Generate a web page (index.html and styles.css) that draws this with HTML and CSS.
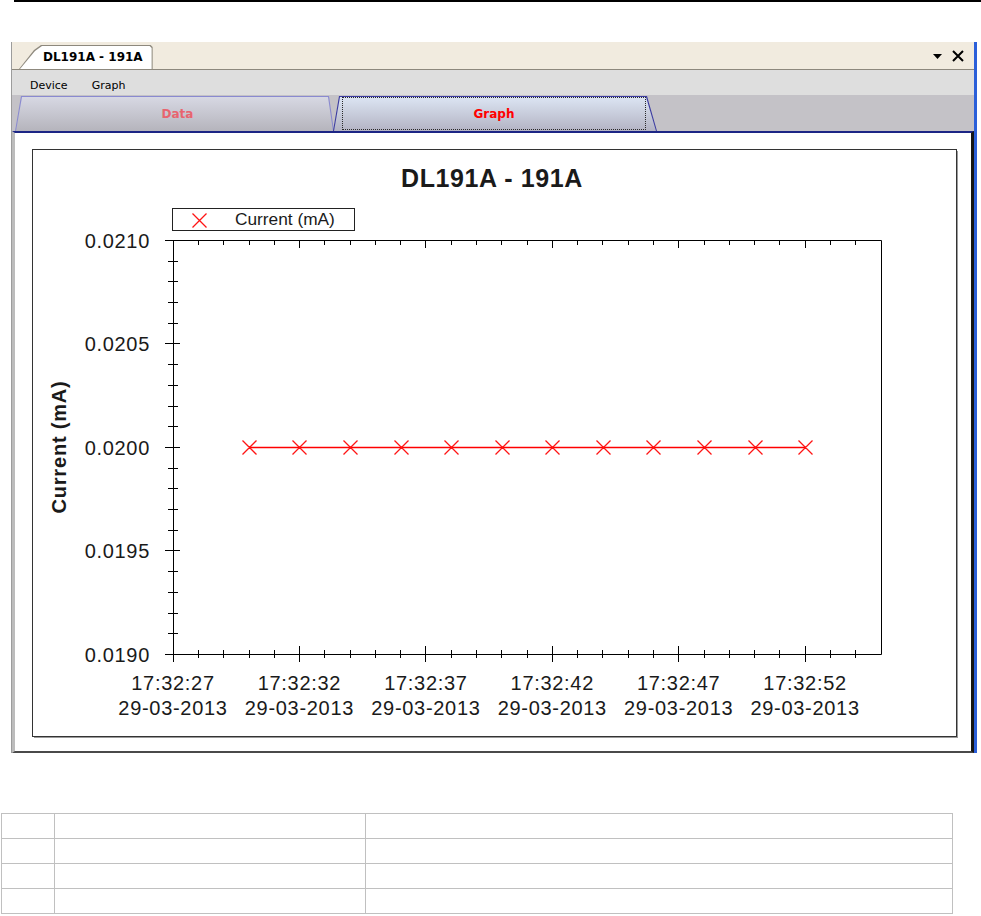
FILE: index.html
```html
<!DOCTYPE html>
<html>
<head>
<meta charset="utf-8">
<title>DL191A - 191A</title>
<link rel="stylesheet" href="styles.css">
</head>
<body>
<div class="rule"></div>
<div class="window">
  <div class="titlebar">
    <div class="doc-tab"><div class="doc-tab-face">DL191A - 191A</div></div>
    <div class="title-tools">
      <svg width="32" height="14" viewBox="0 0 32 14">
        <path d="M1 5h9l-4.5 5z" fill="#000"/>
        <path d="M21 2L31 12M31 2L21 12" stroke="#000" stroke-width="2" fill="none"/>
      </svg>
    </div>
  </div>
  <div class="menubar"><span>Device</span><span>Graph</span></div>
  <div class="tabstrip">
    <div class="tab tab-data"><div class="tab-face face-data">Data</div></div>
    <div class="tab tab-graph"><div class="tab-face face-graph"><div class="focus">Graph</div></div></div>
  </div>
  <div class="content">
    <svg class="chart" width="927" height="590" viewBox="0 0 927 590">
      <rect x="0.5" y="0.5" width="924" height="587" fill="#fff" stroke="#333"/>
      <path d="M925.5 2V589M2 588.5H925" stroke="#9a9a9a" fill="none"/>
      <text class="title" x="460" y="38" text-anchor="middle">DL191A - 191A</text>
      <rect x="140.5" y="59.5" width="182" height="22" fill="#fff" stroke="#222"/>
      <path class="mark" d="M160.5 64.5L174.5 78.5M160.5 78.5L174.5 64.5"/>
      <text class="legend" x="203" y="76">Current (mA)</text>
      <path d="M133 91.5H849.5V505.5H133M141.5 91V506" stroke="#000" fill="none"/>
      <path d="M133 194.5H148M133 298.5H148M133 401.5H148M133 505.5H148" stroke="#000" fill="none"/>
      <path d="M136 112.5H146M136 132.5H146M136 153.5H146M136 174.5H146M136 215.5H146M136 236.5H146M136 257.5H146M136 277.5H146M136 319.5H146M136 339.5H146M136 360.5H146M136 381.5H146M136 422.5H146M136 443.5H146M136 464.5H146M136 484.5H146" stroke="#000" fill="none"/>
      <path d="M141.5 497V513M267.5 497V513M393.5 497V513M520.5 497V513M646.5 497V513M773.5 497V513" stroke="#000" fill="none"/>
      <path d="M166.5 501V509M191.5 501V509M217.5 501V509M242.5 501V509M292.5 501V509M318.5 501V509M343.5 501V509M368.5 501V509M419.5 501V509M444.5 501V509M469.5 501V509M495.5 501V509M545.5 501V509M570.5 501V509M596.5 501V509M621.5 501V509M672.5 501V509M697.5 501V509M722.5 501V509M747.5 501V509M798.5 501V509M823.5 501V509" stroke="#000" fill="none"/>
      <path d="M267.5 91V99M393.5 91V99M520.5 91V99M646.5 91V99M773.5 91V99" stroke="#000" fill="none"/>
      <path d="M166.5 91V96M191.5 91V96M217.5 91V96M242.5 91V96M292.5 91V96M318.5 91V96M343.5 91V96M368.5 91V96M419.5 91V96M444.5 91V96M469.5 91V96M495.5 91V96M545.5 91V96M570.5 91V96M596.5 91V96M621.5 91V96M672.5 91V96M697.5 91V96M722.5 91V96M747.5 91V96M798.5 91V96M823.5 91V96" stroke="#000" fill="none"/>
      <path class="series" d="M217 298.5H773"/>
      <path class="mark" d="M210.5 291.5L224.5 305.5M210.5 305.5L224.5 291.5M260.5 291.5L274.5 305.5M260.5 305.5L274.5 291.5M311.5 291.5L325.5 305.5M311.5 305.5L325.5 291.5M362.5 291.5L376.5 305.5M362.5 305.5L376.5 291.5M412.5 291.5L426.5 305.5M412.5 305.5L426.5 291.5M463.5 291.5L477.5 305.5M463.5 305.5L477.5 291.5M513.5 291.5L527.5 305.5M513.5 305.5L527.5 291.5M564.5 291.5L578.5 305.5M564.5 305.5L578.5 291.5M614.5 291.5L628.5 305.5M614.5 305.5L628.5 291.5M665.5 291.5L679.5 305.5M665.5 305.5L679.5 291.5M716.5 291.5L730.5 305.5M716.5 305.5L730.5 291.5M766.5 291.5L780.5 305.5M766.5 305.5L780.5 291.5"/>
      <g class="ylabels" text-anchor="end">
        <text x="118" y="98.5">0.0210</text>
        <text x="118" y="202">0.0205</text>
        <text x="118" y="305.5">0.0200</text>
        <text x="118" y="409">0.0195</text>
        <text x="118" y="512.5">0.0190</text>
      </g>
      <g class="xlabels" text-anchor="middle">
        <text x="141" y="541">17:32:27</text><text x="141" y="566">29-03-2013</text>
        <text x="267.4" y="541">17:32:32</text><text x="267.4" y="566">29-03-2013</text>
        <text x="393.9" y="541">17:32:37</text><text x="393.9" y="566">29-03-2013</text>
        <text x="520.3" y="541">17:32:42</text><text x="520.3" y="566">29-03-2013</text>
        <text x="646.7" y="541">17:32:47</text><text x="646.7" y="566">29-03-2013</text>
        <text x="773.1" y="541">17:32:52</text><text x="773.1" y="566">29-03-2013</text>
      </g>
      <text class="ytitle" transform="translate(34 298) rotate(-90)" text-anchor="middle">Current (mA)</text>
    </svg>
  </div>
</div>
<table class="grid">
  <colgroup><col class="c1"><col class="c2"><col class="c3"></colgroup>
  <tr><td></td><td></td><td></td></tr>
  <tr><td></td><td></td><td></td></tr>
  <tr><td></td><td></td><td></td></tr>
  <tr><td></td><td></td><td></td></tr>
</table>
</body>
</html>
```
FILE: styles.css
```css
html, body {
  margin: 0;
  padding: 0;
}
body {
  width: 981px;
  height: 916px;
  overflow: hidden;
  background: #fff;
  font-family: "DejaVu Sans", "Liberation Sans", sans-serif;
  color: #000;
}
.rule {
  height: 2px;
  margin-left: 14px;
  background: #000;
}
.window {
  margin: 40px 0 0 11px;
  width: 962px;
  border-left: 1px solid #9c9c9c;
  border-right: 3px solid #2b5fd9;
}
.titlebar {
  display: flex;
  align-items: flex-end;
  height: 27px;
  padding-left: 7px;
  background: #f1ebdf;
  border-bottom: 1px solid #8d887d;
}
.doc-tab {
  height: 24px;
  box-sizing: border-box;
  padding: 1px 1px 0 1px;
  background: #8d887d;
  clip-path: polygon(0 100%, 15px 5px, 22px 0, calc(100% - 2px) 0, 100% 2px, 100% 100%);
}
.doc-tab-face {
  height: 100%;
  background: #fff;
  padding: 0 9px 0 23px;
  font-size: 12px;
  font-weight: bold;
  line-height: 23px;
  clip-path: polygon(0 100%, 15px 5px, 22px 0, calc(100% - 2px) 0, 100% 2px, 100% 100%);
}
.title-tools {
  margin-left: auto;
  align-self: center;
  padding-right: 10px;
  display: flex;
}
.title-tools svg {
  display: block;
}
.menubar {
  display: flex;
  gap: 24px;
  height: 25px;
  box-sizing: border-box;
  padding: 9px 0 0 18px;
  background: #dedede;
  font-size: 11px;
  line-height: 13px;
}
.tabstrip {
  display: flex;
  align-items: flex-end;
  height: 36px;
  padding-left: 3px;
  background: #c4c2c7;
}
.tab {
  height: 35px;
  box-sizing: border-box;
  padding: 1px 1px 0 1px;
}
.tab-data {
  width: 319px;
  background: #8a8ad0;
  clip-path: polygon(0 100%, 6px 0, calc(100% - 5px) 0, 100% 100%);
}
.tab-graph {
  width: 324px;
  margin-left: -1px;
  background: #3a3aa0;
  clip-path: polygon(0 100%, 6px 0, calc(100% - 10px) 0, 100% 100%);
}
.tab-face {
  height: 100%;
  box-sizing: border-box;
  display: flex;
  align-items: center;
  justify-content: center;
  font-size: 12px;
  font-weight: bold;
}
.face-data {
  padding-left: 6px;
  color: #e8646f;
  background: linear-gradient(#d7d8e3, #b5b4bc);
  clip-path: polygon(0 100%, 6px 0, calc(100% - 5px) 0, 100% 100%);
}
.face-graph {
  align-items: stretch;
  padding: 0 10px 1px 8px;
  color: #ff0000;
  background: linear-gradient(#dce5f3, #b3b3c3);
  clip-path: polygon(0 100%, 6px 0, calc(100% - 10px) 0, 100% 100%);
}
.focus {
  flex: 1;
  display: flex;
  align-items: center;
  justify-content: center;
  border: 1px dotted #2a2a2a;
}
.content {
  width: 962px;
  height: 622px;
  box-sizing: border-box;
  border-top: 2px solid #1c2585;
  border-left: 3px solid #bcbcbc;
  border-right: 3px solid #151515;
  border-bottom: 2px solid #4a4a4a;
  padding: 16px 0 0 17px;
  background: #fff;
}
.chart {
  display: block;
  font-family: "Liberation Sans", Arial, sans-serif;
}
.chart text {
  fill: #1a1a1a;
}
.chart .series {
  fill: none;
  stroke: #ff0000;
  stroke-width: 1.6px;
}
.chart .mark {
  fill: none;
  stroke: #ff1414;
  stroke-width: 1.3px;
}
.chart .title {
  font-size: 25px;
  font-weight: bold;
  letter-spacing: 0.6px;
}
.chart .legend {
  font-size: 17.3px;
}
.chart .ylabels,
.chart .xlabels {
  font-size: 20px;
  letter-spacing: 0.7px;
}
.chart .ytitle {
  font-size: 20px;
  font-weight: bold;
  letter-spacing: 0.8px;
}
.grid {
  margin: 60px 0 0 1px;
  border-collapse: collapse;
  table-layout: fixed;
  width: 951px;
}
.grid .c1 { width: 53px; }
.grid .c2 { width: 311px; }
.grid .c3 { width: 587px; }
.grid td {
  height: 24px;
  padding: 0;
  border: 1px solid #c0c0c0;
}
```
